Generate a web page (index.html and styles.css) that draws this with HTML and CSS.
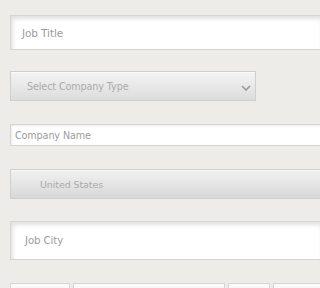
FILE: index.html
```html
<!DOCTYPE html>
<html>
<head>
<meta charset="utf-8">
<link rel="stylesheet" href="styles.css">
</head>
<body>
<div class="frame">
<form class="form">
  <div class="field field-title"><span class="ph">Job Title</span></div>
  <div class="field select select-type">
    <span class="ph ph-select">Select Company Type</span>
    <svg class="chev" width="10" height="6" viewBox="0 0 10 6"><path d="M1 1 L5 5 L9 1" fill="none" stroke="#999" stroke-width="1.6"/></svg>
  </div>
  <div class="field field-company"><span class="ph ph-small">Company Name</span></div>
  <div class="field select select-country"><span class="ph ph-country">United States</span></div>
  <div class="field field-city"><span class="ph ph-city">Job City</span></div>
  <div class="row">
    <div class="mini mini-a"></div>
    <div class="mini mini-b"></div>
    <div class="mini mini-c"></div>
    <div class="mini mini-d"></div>
  </div>
</form>
</div>
</body>
</html>
```
FILE: styles.css
```css
html, body {
  margin: 0;
  padding: 0;
  background: #edece8;
}
.frame {
  height: 288px;
  overflow: hidden;
}
.form {
  box-sizing: border-box;
  display: flex;
  flex-direction: column;
  padding: 15px 0 0 10px;
  font-family: "DejaVu Sans", "Open Sans", sans-serif;
}
.field {
  box-sizing: border-box;
  display: flex;
  align-items: center;
  border: 1px solid #d6d5d2;
  border-right: none;
  background: #fff;
  flex-shrink: 0;
}
.ph {
  color: #9c9c9c;
  font-size: 10.5px;
  letter-spacing: -0.1px;
}
.field-title {
  height: 35px;
  padding-left: 11px;
  box-shadow: inset 2px 3px 4px rgba(0,0,0,0.12);
}
.select {
  background: linear-gradient(#f4f4f4, #dcdcdc);
  border-color: #cfcfcf;
  box-shadow: inset 0 1px 0 #fafafa;
}
.select-type {
  margin-top: 21px;
  width: 246px;
  height: 30px;
  padding-left: 16px;
  position: relative;
  border-right: 1px solid #cfcfcf;
}
.ph-select {
  color: #ababab;
  font-size: 9.6px;
}
.chev {
  position: absolute;
  right: 4px;
  top: 13px;
}
.field-company {
  margin-top: 23px;
  height: 22px;
  padding-left: 4px;
  box-shadow: inset 1px 1px 2px rgba(0,0,0,0.08);
}
.ph-small {
  font-size: 9.6px;
}
.select-country {
  margin-top: 23px;
  height: 30px;
  padding-left: 29px;
  background: linear-gradient(#f1f1f1, #d8d8d8);
}
.ph-country {
  color: #ababab;
  font-size: 9.5px;
}
.field-city {
  margin-top: 22px;
  height: 39px;
  padding-left: 14px;
  box-shadow: inset 2px 3px 4px rgba(0,0,0,0.12);
}
.ph-city {
  font-size: 10.2px;
}
.row {
  margin-top: 23px;
  display: flex;
  gap: 3px;
}
.mini {
  box-sizing: border-box;
  height: 20px;
  flex-shrink: 0;
  border: 1px solid #d6d5d2;
  background: linear-gradient(#fbfbfb, #eeeeee);
}
.mini-a { width: 60px; }
.mini-b { width: 152px; }
.mini-c { width: 42px; }
.mini-d { width: 60px; }
```
